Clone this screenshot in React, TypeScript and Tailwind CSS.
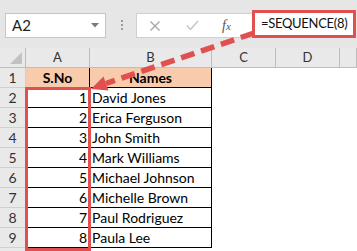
import React from 'react';

const names = [
  'David Jones',
  'Erica Ferguson',
  'John Smith',
  'Mark Williams',
  'Michael Johnson',
  'Michelle Brown',
  'Paul Rodriguez',
  'Paula Lee',
];

const cols = ['A', 'B', 'C', 'D', ''];

const App: React.FC = () => {
  return (
    <div className="relative w-[357px] h-[251px] overflow-hidden bg-white font-['Lato',sans-serif] text-[14px] text-black">
      {/* formula bar */}
      <div className="h-[48px] bg-[#e6e6e6] flex items-start pt-[10px] pl-[5px]">
        <div className="shrink-0 mt-[3px] w-[101px] h-[25px] bg-white border border-[#c6c6c6] flex items-center justify-between pl-[6px] pr-[6px]">
          <span className="text-[15px] text-[#222]">A2</span>
          <svg width="8" height="5" viewBox="0 0 8 5">
            <polygon points="0,0 8,0 4,4.5" fill="#7a7a7a" />
          </svg>
        </div>
        <div className="shrink-0 mt-[10px] ml-[15px] flex flex-col gap-[2px]">
          <span className="w-[2px] h-[2px] bg-[#9a9a9a]" />
          <span className="w-[2px] h-[2px] bg-[#9a9a9a]" />
          <span className="w-[2px] h-[2px] bg-[#9a9a9a]" />
        </div>
        <div className="shrink-0 mt-[3px] ml-[13px] w-[116px] h-[25px] bg-white border border-[#d0d0d0] border-r-0 flex items-center">
          <svg className="ml-[12px]" width="12" height="12" viewBox="0 0 12 12">
            <path d="M1.5 1.5 L10.5 10.5 M10.5 1.5 L1.5 10.5" stroke="#a8a8a8" strokeWidth="1.4" fill="none" />
          </svg>
          <svg className="ml-[25px]" width="13" height="11" viewBox="0 0 13 11">
            <path d="M1 5.5 L4.5 9.5 L12 1" stroke="#c4c4c4" strokeWidth="1.4" fill="none" />
          </svg>
          <span className="ml-[23px] font-['Liberation_Serif',serif] italic text-[14px] text-[#555]">
            f<span className="text-[11px]">x</span>
          </span>
        </div>
        <div className="shrink-0 w-[104px] h-[28px] bg-white border-[3px] border-[#e0504e] flex items-center pl-[6px] overflow-hidden">
          <span className="text-[13px] tracking-[-0.3px] text-[#111] whitespace-nowrap">=SEQUENCE(8)</span>
        </div>
      </div>

      {/* sheet grid */}
      <div className="grid grid-cols-[26px_64px_122px_64px_64px_1fr] auto-rows-[20px]">
        {/* header row */}
        <div className="relative bg-[#e9e9e9] border-r border-b border-[#bdbdbd]">
          <svg className="absolute right-[3px] bottom-[3px]" width="12" height="12" viewBox="0 0 12 12">
            <polygon points="12,0 12,12 0,12" fill="#c2c2c2" />
          </svg>
        </div>
        {cols.map((c, i) => (
          <div
            key={i}
            className="bg-[#e9e9e9] border-r border-b border-[#bdbdbd] flex items-center justify-center text-[13px] text-[#333]"
          >
            {c}
          </div>
        ))}

        {/* row 1 */}
        <div className="bg-[#e9e9e9] border-r border-b border-[#cfcfcf] flex items-center justify-center text-[14px] text-[#333]">
          1
        </div>
        <div className="bg-[#f8cbad] border-r border-b border-black flex items-center justify-center font-bold">
          S.No
        </div>
        <div className="bg-[#f8cbad] border-r border-b border-black flex items-center justify-center font-bold">
          Names
        </div>
        <div />
        <div />
        <div />

        {names.map((n, i) => (
          <React.Fragment key={n}>
            <div className="bg-[#e9e9e9] border-r border-b border-[#cfcfcf] flex items-center justify-center text-[14px] text-[#333]">
              {i + 2}
            </div>
            <div className="border-r border-b border-black flex items-center justify-end pr-[2px]">{i + 1}</div>
            <div className="border-r border-b border-black flex items-center pl-[2px] whitespace-nowrap">{n}</div>
            <div />
            <div />
            <div />
          </React.Fragment>
        ))}
        <div className="bg-[#e9e9e9] border-r border-[#cfcfcf]" />
      </div>

      {/* annotation: red box around A2:A9 */}
      <div className="absolute left-[25px] top-[87px] w-[66px] h-[164px] border-[3px] border-[#e0504e]" />

      {/* annotation: dashed arrow */}
      <svg className="absolute left-0 top-0" width="357" height="251" viewBox="0 0 357 251">
        <line x1="254" y1="33" x2="106" y2="83.5" stroke="#e0504e" strokeWidth="5.5" strokeDasharray="14 7" />
        <polygon points="91,89 108.5,90.5 103.5,76.5" fill="#e0504e" />
      </svg>
    </div>
  );
};

export default App;
